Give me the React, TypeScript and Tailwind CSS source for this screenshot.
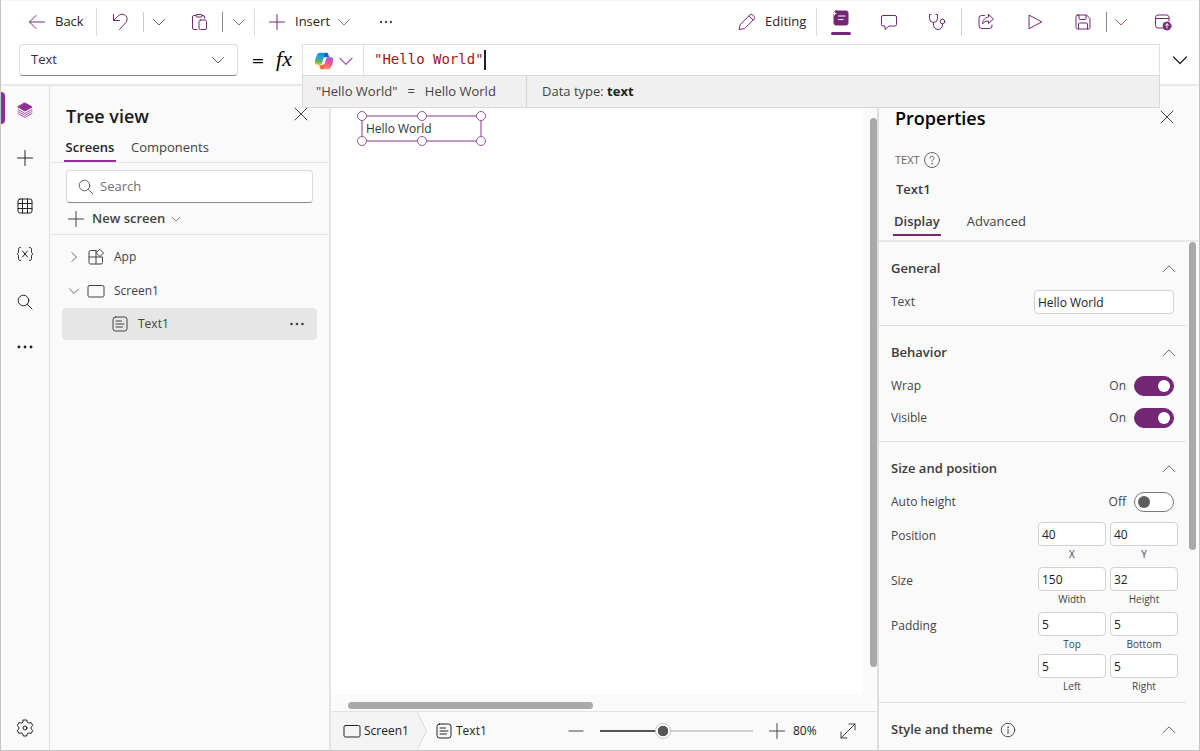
import { useState, type ReactNode } from "react";
import { clsx } from "clsx";

type IconProps = { className?: string; children: ReactNode };

const Icon = ({ className, children }: IconProps) => (
  <svg
    viewBox="0 0 20 20"
    fill="none"
    stroke="currentColor"
    strokeWidth="1"
    strokeLinecap="round"
    strokeLinejoin="round"
    aria-hidden="true"
    className={clsx("shrink-0", className ?? "size-5")}
  >
    {children}
  </svg>
);

const ChevronDown = ({ className = "size-5" }: { className?: string }) => (
  <Icon className={className}>
    <path d="M4.500 7.500 10 13l5.500-5.500" />
  </Icon>
);

const Plus = () => (
  <Icon>
    <path d="M10 2.500v15M2.500 10h15" />
  </Icon>
);

const Dots = ({ className = "size-5" }: { className?: string }) => (
  <Icon className={className}>
    <g fill="currentColor" stroke="none">
      <circle cx="4.500" cy="10" r="1.300" />
      <circle cx="10" cy="10" r="1.300" />
      <circle cx="15.500" cy="10" r="1.300" />
    </g>
  </Icon>
);

const Close = () => (
  <Icon>
    <path d="m4 4 12 12M16 4 4 16" />
  </Icon>
);

const SearchIcon = () => (
  <Icon>
    <circle cx="8.500" cy="8.500" r="5.300" />
    <path d="m12.400 12.400 4.600 4.600" />
  </Icon>
);

const ScreenIcon = () => (
  <Icon>
    <rect x="2" y="4.500" width="16" height="11.500" rx="1.500" />
  </Icon>
);

const TextIcon = ({ className }: { className?: string }) => (
  <Icon className={clsx("size-5", className)}>
    <rect x="3" y="3" width="14" height="14" rx="2.500" />
    <path d="M6 7h5.500M6 10h8M6 13h6.500" />
  </Icon>
);

const Copilot = () => (
  <svg viewBox="0 0 48 48" className="size-5 shrink-0" aria-hidden="true">
    <defs>
      <linearGradient id="cp-a" x1="38" y1="18" x2="24" y2="5" gradientUnits="userSpaceOnUse">
        <stop stopColor="#0078d4" />
        <stop offset="0.5" stopColor="#1a5fd0" />
        <stop offset="1" stopColor="#1c4bb8" />
      </linearGradient>
      <linearGradient id="cp-b" x1="11" y1="33" x2="25" y2="43" gradientUnits="userSpaceOnUse">
        <stop stopColor="#ffb657" />
        <stop offset="0.6" stopColor="#ff5f3d" />
        <stop offset="1" stopColor="#d9304f" />
      </linearGradient>
      <linearGradient id="cp-c" x1="14" y1="4" x2="9" y2="33" gradientUnits="userSpaceOnUse">
        <stop stopColor="#0d91e1" />
        <stop offset="0.45" stopColor="#2fa6c8" />
        <stop offset="0.7" stopColor="#52b471" />
        <stop offset="1" stopColor="#f5c400" />
      </linearGradient>
      <linearGradient id="cp-d" x1="40" y1="14" x2="27" y2="44" gradientUnits="userSpaceOnUse">
        <stop stopColor="#a05be8" />
        <stop offset="0.45" stopColor="#ee5097" />
        <stop offset="0.8" stopColor="#ff7a70" />
        <stop offset="1" stopColor="#ff9b52" />
      </linearGradient>
    </defs>
    <path
      fill="url(#cp-a)"
      d="M34.142 7.325A4.63 4.63 0 0 0 29.7 4h-1.35a4.63 4.63 0 0 0-4.554 3.794L21.48 20.407l.575-1.965a4.63 4.63 0 0 1 4.444-3.33h7.853l3.294 1.282 3.175-1.282h-.926a4.63 4.63 0 0 1-4.443-3.325l-1.31-4.462Z"
    />
    <path
      fill="url(#cp-b)"
      d="M14.33 40.656A4.63 4.63 0 0 0 18.779 44h2.87a4.63 4.63 0 0 0 4.629-4.51l.312-12.163-.654 2.233a4.63 4.63 0 0 1-4.443 3.329h-7.919l-2.823-1.532-3.057 1.532h.912a4.63 4.63 0 0 1 4.447 3.344l1.277 4.423Z"
    />
    <path
      fill="url(#cp-c)"
      d="M29.5 4H13.46c-4.583 0-7.332 6.057-9.165 12.113C2.123 23.29-.72 32.885 7.503 32.885h6.925a4.63 4.63 0 0 0 4.456-3.358 2078 2078 0 0 1 4.971-17.156c.843-2.843 1.544-5.284 2.621-6.805C27.08 4.713 28.086 4 29.5 4Z"
    />
    <path
      fill="url(#cp-d)"
      d="M18.498 44h16.04c4.582 0 7.332-6.058 9.165-12.115 2.172-7.177 5.013-16.775-3.208-16.775h-6.926a4.63 4.63 0 0 0-4.456 3.358 2084 2084 0 0 1-4.972 17.16c-.842 2.843-1.544 5.285-2.62 6.806-.604.852-1.61 1.566-3.023 1.566Z"
    />
  </svg>
);

type ToolProps = { label: string; className?: string; children: ReactNode };

const Tool = ({ label, className, children }: ToolProps) => (
  <button
    type="button"
    aria-label={label}
    className={clsx("flex h-10 shrink-0 items-center justify-center", className)}
  >
    {children}
  </button>
);

const Divider = ({ className }: { className?: string }) => (
  <span className={clsx("w-px shrink-0", className)} />
);

const Toolbar = () => (
  <header className="flex h-11 shrink-0 items-center border-t border-[#f3f3f3] bg-white pb-0.5 text-[#742774]">
    <button type="button" className="ml-[26px] flex h-10 w-[69px] shrink-0 items-center gap-2">
      <Icon>
        <path d="M17.500 10H2.500M9 3.500 2.500 10 9 16.500" />
      </Icon>
      <span className="text-[13px] text-[#242424]">Back</span>
    </button>
    <Divider className="h-7 bg-[#dcdcdc]" />
    <Tool label="Undo" className="w-[46px]">
      <Icon>
        <path d="M3.500 2.500v6h6" />
        <path d="M3.500 8.500 8.500 3.700a5 5 0 0 1 7.200 7L9.500 17.500" />
      </Icon>
    </Tool>
    <Divider className="h-5 bg-[#c8c8c8]" />
    <Tool label="Undo options" className="w-[30px] text-[#616161]">
      <ChevronDown />
    </Tool>
    <Tool label="Paste" className="ml-px w-[47px]">
      <Icon>
        <path d="M7 3.500H5A1.500 1.500 0 0 0 3.500 5v11A1.500 1.500 0 0 0 5 17.500h3M13 3.500h1A1.500 1.500 0 0 1 15.500 5v1" />
        <rect x="7" y="2.500" width="6" height="2.500" rx="1" />
        <rect x="10" y="8" width="7.500" height="9.500" rx="1.500" />
      </Icon>
    </Tool>
    <Divider className="h-5 bg-[#8a8a8a]" />
    <Tool label="Paste options" className="w-[31px] text-[#8a7090]">
      <ChevronDown />
    </Tool>
    <Divider className="h-7 bg-[#dcdcdc]" />
    <button type="button" className="ml-3 flex h-10 shrink-0 items-center">
      <Plus />
      <span className="ml-2 w-9 text-left text-[13px] text-[#242424]">Insert</span>
      <ChevronDown className="ml-[3px] size-5 text-[#7d7d7d]" />
    </button>
    <Tool label="More commands" className="ml-3 w-10">
      <Dots className="size-[18px] text-[#5c3a63]" />
    </Tool>

    <button type="button" className="ml-auto flex h-10 w-[79px] shrink-0 items-center gap-2">
      <Icon>
        <path d="m12 4 4 4M3.500 12.300 12.800 3a2.100 2.100 0 0 1 3 0l1.200 1.200a2.100 2.100 0 0 1 0 3L7.700 16.500l-5.200 1z" />
      </Icon>
      <span className="text-[13px] text-[#242424]">Editing</span>
    </button>
    <Divider className="h-7 bg-[#dcdcdc]" />
    <button
      type="button"
      aria-label="Properties"
      aria-pressed="true"
      className="ml-3.5 flex w-5 shrink-0 flex-col items-center gap-1"
    >
      <Icon>
        <rect x="3" y="3" width="14" height="14" rx="2" fill="currentColor" />
        <path d="M7.500 8h6.500M7.500 11.500h4.500" stroke="#fff" strokeWidth="1.200" />
        <path d="M2 5.500h3M3.500 4v3" stroke="#fff" />
      </Icon>
      <span className="h-[3px] w-5 rounded-sm bg-[#742774]" />
    </button>
    <Tool label="Comments" className="ml-3.5 w-12">
      <Icon>
        <path d="M4 3.500h12A1.500 1.500 0 0 1 17.500 5v7.500A1.500 1.500 0 0 1 16 14h-6l-4 3.500V14H4a1.500 1.500 0 0 1-1.500-1.500V5A1.500 1.500 0 0 1 4 3.500Z" />
      </Icon>
    </Tool>
    <Tool label="App checker" className="w-12">
      <Icon>
        <path d="M4 2.500H2.500v4a4 4 0 0 0 8 0v-4H9M6.500 10.500V13a4.500 4.500 0 0 0 9 0v-1" />
        <circle cx="15.500" cy="9.500" r="2.300" />
      </Icon>
    </Tool>
    <Divider className="h-7 bg-[#cfcfcf]" />
    <Tool label="Share" className="w-12">
      <Icon>
        <path d="M8.500 3.500h-3A2.500 2.500 0 0 0 3 6v8a2.500 2.500 0 0 0 2.500 2.500h8A2.500 2.500 0 0 0 16 14v-1" />
        <path d="M12.500 2.500 17.500 7l-5 4.500V9C9.500 9 8 10 6.500 12c.3-3.500 2-6.500 6-7z" />
      </Icon>
    </Tool>
    <Tool label="Preview" className="w-[50px]">
      <Icon>
        <path d="M4 3.500v13.200L16.500 10z" />
      </Icon>
    </Tool>
    <Tool label="Save" className="w-[46px]">
      <Icon>
        <path d="M4.500 3h9L17 6.500v9a1.500 1.500 0 0 1-1.500 1.500h-11A1.500 1.500 0 0 1 3 15.500v-11A1.500 1.500 0 0 1 4.500 3Z" />
        <path d="M6 3v3.500a1 1 0 0 0 1 1h5a1 1 0 0 0 1-1V3M5.500 17v-5a1 1 0 0 1 1-1h7a1 1 0 0 1 1 1v5" />
      </Icon>
    </Tool>
    <Divider className="h-5 bg-[#8a8a8a]" />
    <Tool label="Save options" className="w-7 text-[#a0704e]">
      <ChevronDown />
    </Tool>
    <Tool label="Publish" className="mr-5 ml-3 w-8">
      <Icon>
        <path d="M9.500 16H5a2.500 2.500 0 0 1-2.500-2.500v-8A2.500 2.500 0 0 1 5 3h8.500A2.500 2.500 0 0 1 16 5.500V9M2.500 6.500H16" />
        <circle cx="14" cy="14" r="4" fill="currentColor" />
        <path d="M14 16.200v-4.400M12.200 13.500 14 11.700l1.800 1.800" stroke="#fff" />
      </Icon>
    </Tool>
  </header>
);

const FormulaBar = () => (
  <div className="flex h-[42px] shrink-0 border-b-2 border-[#e8e8e8] bg-white">
    <div className="ml-[18px] grid h-8 w-[219px] shrink-0 items-center">
      <select
        aria-label="Property"
        className="col-start-1 row-start-1 h-8 appearance-none rounded border border-[#dcdcdc] border-b-[#8a8a8a] bg-white px-[11px] text-[13px] text-[#333]"
      >
        <option>Text</option>
      </select>
      <ChevronDown className="pointer-events-none col-start-1 row-start-1 mr-2.5 size-5 justify-self-end text-[#616161]" />
    </div>
    <span className="ml-3 flex h-[34px] w-4 shrink-0 items-center justify-center font-['DejaVu_Sans'] text-base text-black">
      =
    </span>
    <span className="flex h-7 w-9 shrink-0 items-center justify-center font-['Liberation_Serif'] text-[22px] text-black italic">
      fx
    </span>
    <div className="relative flex h-8 min-w-0 flex-1 border border-b-0 border-[#e0e0e0]">
      <button
        type="button"
        aria-label="Copilot"
        className="flex w-[61px] shrink-0 items-center gap-px border-r border-[#e0e0e0] pl-[11px] text-[#9b4fa5]"
      >
        <Copilot />
        <ChevronDown className="size-[22px]" />
      </button>
      <input
        aria-label="Formula"
        defaultValue={'"Hello World"'}
        className="ml-2.5 field-sizing-content h-7 font-['DejaVu_Sans_Mono'] text-[14px] text-[#a31515] outline-none"
      />
      <span className="mt-[5px] h-5 w-0.5 shrink-0 bg-[#222]" />
      {/* result strip hangs over the panels below */}
      <div className="absolute top-[30px] -right-px -left-px z-10 flex h-[33px] items-center border border-[#d9d9d9] bg-[#f0f0f0] text-[13px] text-[#444]">
        <div className="flex h-full w-[224px] items-center gap-2.5 border-r border-[#d4d4d4] pl-[13px]">
          <span>"Hello World"</span>
          <span>=</span>
          <span>Hello World</span>
        </div>
        <span className="pl-[15px]">
          Data type: <b className="text-[#222]">text</b>
        </span>
      </div>
    </div>
    <button
      type="button"
      aria-label="Expand formula bar"
      className="flex h-8 w-[39px] shrink-0 items-center justify-center text-[#222]"
    >
      <Icon>
        <path d="M3.500 7 10 13.500 16.500 7" strokeWidth="1.300" />
      </Icon>
    </button>
  </div>
);

const railItems = [
  {
    label: "Tree view",
    icon: (
      <Icon className="size-5 text-[#8f2f93]">
        <path d="m10 3 7 4-7 4-7-4z" fill="currentColor" />
        <path d="m3 9.500 7 4 7-4M3 11.500l7 4 7-4M3 13.500l7 4 7-4" strokeWidth="0.800" />
      </Icon>
    ),
  },
  { label: "Insert", icon: <Plus /> },
  {
    label: "Data",
    icon: (
      <Icon>
        <rect x="3" y="3" width="14" height="14" rx="2" />
        <path d="M7.500 3v14M12.500 3v14M3 7.500h14M3 12.500h14" />
      </Icon>
    ),
  },
  {
    label: "Variables",
    icon: (
      <Icon>
        <path d="M5.500 3.500c-1.500 0-2 .7-2 2v2.300c0 1.200-.5 1.900-1.500 2.200 1 .3 1.500 1 1.500 2.200v2.300c0 1.300.5 2 2 2M14.500 3.500c1.500 0 2 .7 2 2v2.300c0 1.200.5 1.900 1.500 2.200-1 .3-1.500 1-1.500 2.200v2.300c0 1.300-.5 2-2 2M7.500 7l5 6M12.500 7l-5 6" />
      </Icon>
    ),
  },
  { label: "Search", icon: <SearchIcon /> },
  { label: "More", icon: <Dots className="size-[22px]" /> },
];

const Rail = () => (
  <nav className="flex w-[49px] shrink-0 flex-col border-r border-[#dedede] text-[#242424]">
    {railItems.map((item, i) => (
      <button
        key={item.label}
        type="button"
        aria-label={item.label}
        className={clsx(
          "flex shrink-0 items-center justify-center",
          i === railItems.length - 1 ? "h-[42px]" : "h-12",
          i === 0 && "relative",
        )}
      >
        {i === 0 && <span className="absolute top-1.5 left-0 h-8 w-1 rounded-r-sm bg-[#8f2f93]" />}
        {item.icon}
      </button>
    ))}
    <button
      type="button"
      aria-label="Settings"
      className="mt-auto flex h-11 items-center justify-center"
    >
      <Icon>
        <path d="M8.300 2h3.400l.6 2.300 1.500.9 2.300-.7 1.700 3-1.700 1.600v1.800l1.700 1.600-1.700 3-2.300-.7-1.500.9-.6 2.300H8.300l-.6-2.300-1.500-.9-2.300.7-1.700-3 1.700-1.600V9.100L2.200 7.500l1.700-3 2.300.7 1.500-.9z" />
        <circle cx="10" cy="10" r="2" />
      </Icon>
    </button>
  </nav>
);

const TreeView = () => (
  <aside className="flex w-[281px] shrink-0 flex-col border-r-2 border-[#e4e4e4]">
    <div className="flex h-12 items-end justify-between pr-[18px] pl-4">
      <h2 className="flex h-9 items-center text-[18px] font-semibold text-[#1b1b1b]">Tree view</h2>
      <button type="button" aria-label="Close tree view" className="mb-2.5 text-[#444]">
        <Close />
      </button>
    </div>
    <div role="tablist" className="flex h-[29px] gap-[13px] border-b border-[#e6e6e6] pl-3.5 text-[13px]">
      <button
        type="button"
        role="tab"
        aria-selected="true"
        className="w-[52px] border-b-2 border-[#8f2f93] pt-0.5 text-center font-semibold text-[#242424]"
      >
        Screens
      </button>
      <button
        type="button"
        role="tab"
        aria-selected="false"
        className="border-b-2 border-transparent px-0.5 pt-0.5 text-[#424242]"
      >
        Components
      </button>
    </div>
    <div className="flex flex-col border-b border-[#e6e6e6] px-4">
      <label className="mt-[7px] flex h-[33px] items-center gap-1 rounded border border-[#dcdcdc] border-b-[#8a8a8a] bg-white pl-[9px] text-[#616161]">
        <SearchIcon />
        <input
          aria-label="Search"
          placeholder="Search"
          className="min-w-0 flex-1 text-[13px] outline-none placeholder:text-[#707070]"
        />
      </label>
      <button type="button" className="flex h-[31px] items-center text-[13px] font-semibold text-[#424242]">
        <Plus />
        <span className="ml-1.5">New screen</span>
        <ChevronDown className="ml-1 size-3.5" />
      </button>
    </div>
    <ul className="flex flex-col px-3 pt-[5px] text-[12px] text-[#424242]">
      <li className="flex h-[34px] items-center pl-1">
        <Icon className="size-4">
          <path d="m7.500 4.500 5.500 5.500-5.500 5.500" />
        </Icon>
        <Icon className="ml-1 size-5">
          <path d="M10 3.500H4.500A1.500 1.500 0 0 0 3 5v10.500A1.500 1.500 0 0 0 4.500 17H15a1.500 1.500 0 0 0 1.500-1.500V10H3M10 3.500V17" />
          <path d="m14 2.500 3.500 3.500L14 9.500 10.500 6z" />
        </Icon>
        <span className="ml-2">App</span>
      </li>
      <li className="flex h-[34px] items-center pl-1">
        <ChevronDown className="size-4" />
        <span className="ml-1">
          <ScreenIcon />
        </span>
        <span className="ml-2">Screen1</span>
      </li>
      <li className="flex h-8 items-center rounded bg-[#e6e6e6] pl-12">
        <TextIcon />
        <span className="ml-2">Text1</span>
        <button type="button" aria-label="More actions" className="mr-2.5 ml-auto">
          <Dots />
        </button>
      </li>
    </ul>
  </aside>
);

const handles = [
  "-top-1.5 -left-1.5",
  "-top-1.5 left-[54px]",
  "-top-1.5 -right-1.5",
  "-bottom-1.5 -left-1.5",
  "-bottom-1.5 left-[54px]",
  "-right-1.5 -bottom-1.5",
];

const Canvas = () => {
  const [zoom, setZoom] = useState(80);

  return (
    <main className="flex min-w-0 flex-1 flex-col border-r-2 border-[#dedede]">
      <div className="flex min-h-0 flex-1">
        <div className="relative min-w-0 flex-1 bg-white">
          <div className="absolute top-[29px] left-[30px] flex h-[27px] w-[121px] items-center border-2 border-[#c49ac8] pl-[3px] text-[12px] text-[#333]">
            Hello World
            {handles.map((position) => (
              <span
                key={position}
                className={clsx(
                  "absolute size-2.5 rounded-full border border-[#94559a] bg-white",
                  position,
                )}
              />
            ))}
          </div>
        </div>
        <div className="flex w-3.5 shrink-0 flex-col items-end pt-8 pb-7">
          <span className="w-[7px] flex-1 rounded-full bg-[#a9a9a9]" />
        </div>
      </div>
      <div className="flex h-4 shrink-0 items-center pt-1 pl-[17px]">
        <span className="h-[7px] w-[245px] rounded-full bg-[#a9a9a9]" />
      </div>
      <div className="flex h-[39px] shrink-0 items-center border-t border-[#e2e2e2] text-[12px] text-[#222]">
        <div className="flex h-full w-[86px] shrink-0 items-center gap-0.5 bg-[#f4f4f4] pl-[11px]">
          <ScreenIcon />
          Screen1
        </div>
        <svg viewBox="0 0 10 38" className="h-[38px] w-2.5 shrink-0" aria-hidden="true">
          <path d="M0 0 9.500 19 0 38z" fill="#f4f4f4" />
          <path d="M0 0 9.500 19 0 38" fill="none" stroke="#d8d8d8" />
        </svg>
        <TextIcon className="ml-[7px]" />
        <span className="ml-0.5">Text1</span>
        <button type="button" aria-label="Zoom out" className="ml-auto text-[#444]">
          <Icon>
            <path d="M3 10h14" />
          </Icon>
        </button>
        <input
          type="range"
          aria-label="Zoom"
          min={0}
          max={200}
          value={zoom}
          onChange={(e) => setZoom(Number(e.target.value))}
          className="mr-3.5 ml-3.5 h-0.5 w-[153px] appearance-none bg-linear-to-r from-[#555] from-40% to-[#d0d0d0] to-40% [&::-webkit-slider-thumb]:size-4 [&::-webkit-slider-thumb]:appearance-none [&::-webkit-slider-thumb]:rounded-full [&::-webkit-slider-thumb]:border [&::-webkit-slider-thumb]:border-[#c4c4c4] [&::-webkit-slider-thumb]:bg-[radial-gradient(circle_closest-side,#555_70%,#fff_80%)]"
        />
        <button type="button" aria-label="Zoom in" className="text-[#444]">
          <Plus />
        </button>
        <span className="ml-1.5 w-[25px]">{zoom}%</span>
        <button type="button" aria-label="Fit to window" className="mr-[19px] ml-5 text-[#444]">
          <Icon>
            <path d="M11 3h6v6M9 17H3v-6M17 3 3 17" />
          </Icon>
        </button>
      </div>
    </main>
  );
};

type SectionProps = { title: string; info?: boolean; children?: ReactNode };

const Section = ({ title, info, children }: SectionProps) => (
  <section className="shrink-0 border-b border-[#dedede] px-3 pt-[9px] pb-[7px]">
    <div className="flex h-[35px] items-center text-[#3b3b3b]">
      <h3 className="text-[13px] font-semibold">{title}</h3>
      {info && (
        <Icon className="ml-1.5 size-[18px]">
          <circle cx="10" cy="10" r="7.500" />
          <path d="M10 9v5" />
          <circle cx="10" cy="6.800" r="0.300" />
        </Icon>
      )}
      <button type="button" aria-label={`Collapse ${title}`} className="-mr-1 ml-auto text-[#555]">
        <Icon className="size-[18px]">
          <path d="M3.500 13 10 6.500l6.500 6.500" />
        </Icon>
      </button>
    </div>
    {children}
  </section>
);

const Toggle = ({ label, on }: { label: string; on?: boolean }) => {
  const [checked, setChecked] = useState(Boolean(on));

  return (
    <label className="flex h-8 items-center text-[12px] text-[#444]">
      {label}
      <span className="mr-2 ml-auto">{checked ? "On" : "Off"}</span>
      <input
        type="checkbox"
        role="switch"
        checked={checked}
        onChange={(e) => setChecked(e.target.checked)}
        className="flex h-5 w-10 appearance-none items-center rounded-full border border-[#777] bg-white px-[3px] before:size-3 before:rounded-full before:bg-[#605e5c] checked:justify-end checked:border-[#742774] checked:bg-[#742774] checked:before:bg-white"
      />
    </label>
  );
};

const NumberGroup = ({ label, fields }: { label: string; fields: [string, string][] }) => (
  <fieldset className="-mr-1 flex justify-between pt-1 pb-px">
    <legend className="float-left flex h-7 items-center text-[12px] text-[#444]">{label}</legend>
    <div className="ml-auto grid grid-cols-[68px_68px] gap-x-1 gap-y-0.5">
      {fields.map(([name, value]) => (
        <label key={name} className="flex flex-col-reverse items-center text-[10px] leading-4 text-[#444]">
          {name}
          <input
            defaultValue={value}
            className="h-6 w-full rounded border border-[#d1d1d1] bg-white px-[3px] text-[12px] text-[#222]"
          />
        </label>
      ))}
    </div>
  </fieldset>
);

const Properties = () => (
  <aside className="flex w-80 shrink-0 flex-col">
    <div className="flex h-[50px] shrink-0 items-end justify-between pr-[22px] pl-4">
      <h2 className="flex h-9 items-center text-[18px] font-semibold text-black">Properties</h2>
      <button type="button" aria-label="Close properties" className="mb-[9px] text-[#444]">
        <Close />
      </button>
    </div>
    <div className="mt-3 flex h-6 shrink-0 items-center gap-0.5 pl-4 text-[11px] text-[#666]">
      TEXT
      <button type="button" aria-label="Help">
        <Icon>
          <circle cx="10" cy="10" r="7.500" />
          <path d="M8 8.200a2 2 0 1 1 3 1.700c-.7.500-1 .8-1 1.600" />
          <circle cx="10" cy="13.800" r="0.300" />
        </Icon>
      </button>
    </div>
    <p className="mt-1.5 flex h-6 shrink-0 items-center pl-[17px] text-[13px] font-semibold text-[#3b3b3b]">
      Text1
    </p>
    <div
      role="tablist"
      className="flex h-10 shrink-0 items-end gap-[26px] border-b-2 border-[#e8e8e8] pb-1 pl-3.5 text-[13px]"
    >
      <button
        type="button"
        role="tab"
        aria-selected="true"
        className="h-7 border-b-2 border-[#742774] px-px pt-0.5 font-semibold text-[#3b3b3b]"
      >
        Display
      </button>
      <button
        type="button"
        role="tab"
        aria-selected="false"
        className="h-7 border-b-2 border-transparent pt-0.5 text-[#424242]"
      >
        Advanced
      </button>
    </div>
    <div className="flex min-h-0 flex-1 overflow-hidden">
      <div className="flex min-w-0 flex-1 flex-col">
        <Section title="General">
          <label className="flex h-8 items-center justify-between text-[12px] text-[#444]">
            Text
            <input
              defaultValue="Hello World"
              className="h-6 w-[140px] rounded border border-[#d1d1d1] bg-white px-[3px] text-[12px] text-[#222]"
            />
          </label>
        </Section>
        <Section title="Behavior">
          <Toggle label="Wrap" on />
          <Toggle label="Visible" on />
        </Section>
        <Section title="Size and position">
          <Toggle label="Auto height" />
          <NumberGroup label="Position" fields={[["X", "40"], ["Y", "40"]]} />
          <NumberGroup label="Size" fields={[["Width", "150"], ["Height", "32"]]} />
          <NumberGroup
            label="Padding"
            fields={[["Top", "5"], ["Bottom", "5"], ["Left", "5"], ["Right", "5"]]}
          />
        </Section>
        <Section title="Style and theme" info />
      </div>
      <span className="mx-[3px] h-[308px] w-[7px] shrink-0 rounded-full bg-[#a9a9a9]" />
    </div>
  </aside>
);

const App = () => (
  <div className="flex h-screen min-w-[1000px] flex-col overflow-hidden border border-t-0 border-[#c4c4c4] bg-[#fafafa] font-['Open_Sans','Noto_Sans',sans-serif]">
    <Toolbar />
    <FormulaBar />
    <div className="flex min-h-0 flex-1">
      <Rail />
      <TreeView />
      <Canvas />
      <Properties />
    </div>
  </div>
);

export default App;
